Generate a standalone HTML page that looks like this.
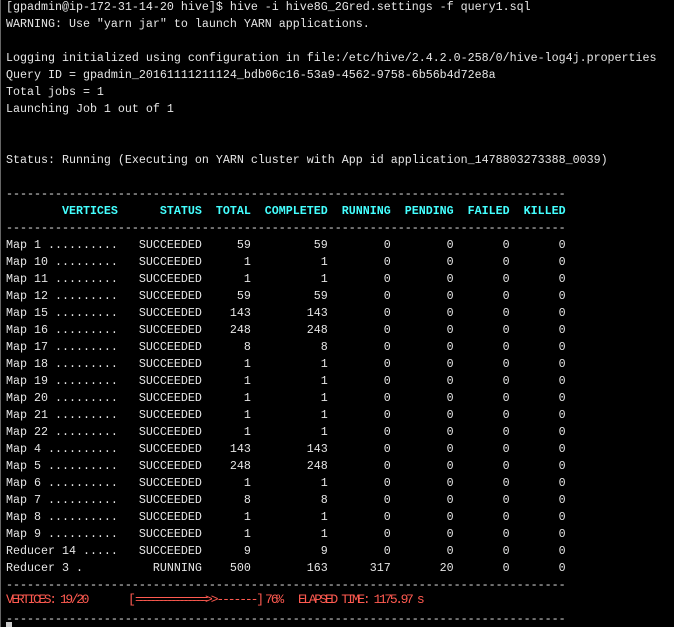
<!DOCTYPE html>
<html><head><meta charset="utf-8"><style>
html,body{margin:0;padding:0;background:#000;width:674px;height:627px;overflow:hidden}
body{position:relative}
.lb{position:absolute;left:0;top:0;width:1px;height:627px;background:#666}
pre{position:absolute;left:6px;top:-1px;margin:0;font-family:"Liberation Mono",monospace;font-size:11.67px;line-height:17px;color:#e6e6e6}
.c{color:#4ff;font-weight:bold}
.p{position:absolute;top:591px;font-family:"Liberation Mono",monospace;font-size:13px;line-height:17px;color:#ff5a50;white-space:pre}
.cur{position:absolute;left:6px;top:622px;width:6px;height:5px;background:#ccc}
</style></head><body>
<div class="lb"></div>
<pre>[gpadmin@ip-172-31-14-20 hive]$ hive -i hive8G_2Gred.settings -f query1.sql
WARNING: Use "yarn jar" to launch YARN applications.

Logging initialized using configuration in file:/etc/hive/2.4.2.0-258/0/hive-log4j.properties
Query ID = gpadmin_20161111211124_bdb06c16-53a9-4562-9758-6b56b4d72e8a
Total jobs = 1
Launching Job 1 out of 1


Status: Running (Executing on YARN cluster with App id application_1478803273388_0039)

--------------------------------------------------------------------------------
<span class="c">        VERTICES      STATUS  TOTAL  COMPLETED  RUNNING  PENDING  FAILED  KILLED</span>
--------------------------------------------------------------------------------
Map 1 ..........   SUCCEEDED     59         59        0        0       0       0
Map 10 .........   SUCCEEDED      1          1        0        0       0       0
Map 11 .........   SUCCEEDED      1          1        0        0       0       0
Map 12 .........   SUCCEEDED     59         59        0        0       0       0
Map 15 .........   SUCCEEDED    143        143        0        0       0       0
Map 16 .........   SUCCEEDED    248        248        0        0       0       0
Map 17 .........   SUCCEEDED      8          8        0        0       0       0
Map 18 .........   SUCCEEDED      1          1        0        0       0       0
Map 19 .........   SUCCEEDED      1          1        0        0       0       0
Map 20 .........   SUCCEEDED      1          1        0        0       0       0
Map 21 .........   SUCCEEDED      1          1        0        0       0       0
Map 22 .........   SUCCEEDED      1          1        0        0       0       0
Map 4 ..........   SUCCEEDED    143        143        0        0       0       0
Map 5 ..........   SUCCEEDED    248        248        0        0       0       0
Map 6 ..........   SUCCEEDED      1          1        0        0       0       0
Map 7 ..........   SUCCEEDED      8          8        0        0       0       0
Map 8 ..........   SUCCEEDED      1          1        0        0       0       0
Map 9 ..........   SUCCEEDED      1          1        0        0       0       0
Reducer 14 .....   SUCCEEDED      9          9        0        0       0       0
Reducer 3 .          RUNNING    500        163      317       20       0       0
--------------------------------------------------------------------------------

--------------------------------------------------------------------------------</pre>
<div class="p" style="left:6px;letter-spacing:-2.4px">VERTICES: 19/20</div>
<div class="p" style="left:128px">[</div>
<div class="p" style="left:135px;letter-spacing:-3.7px">=================</div>
<div class="p" style="left:205px;letter-spacing:-2.1px">&gt;&gt;-------]</div>
<div class="p" style="left:265px;letter-spacing:-2.1px">76%</div>
<div class="p" style="left:298px;letter-spacing:-2.4px">ELAPSED TIME: 1175.97 s</div>
<div class="cur"></div>
</body></html>
